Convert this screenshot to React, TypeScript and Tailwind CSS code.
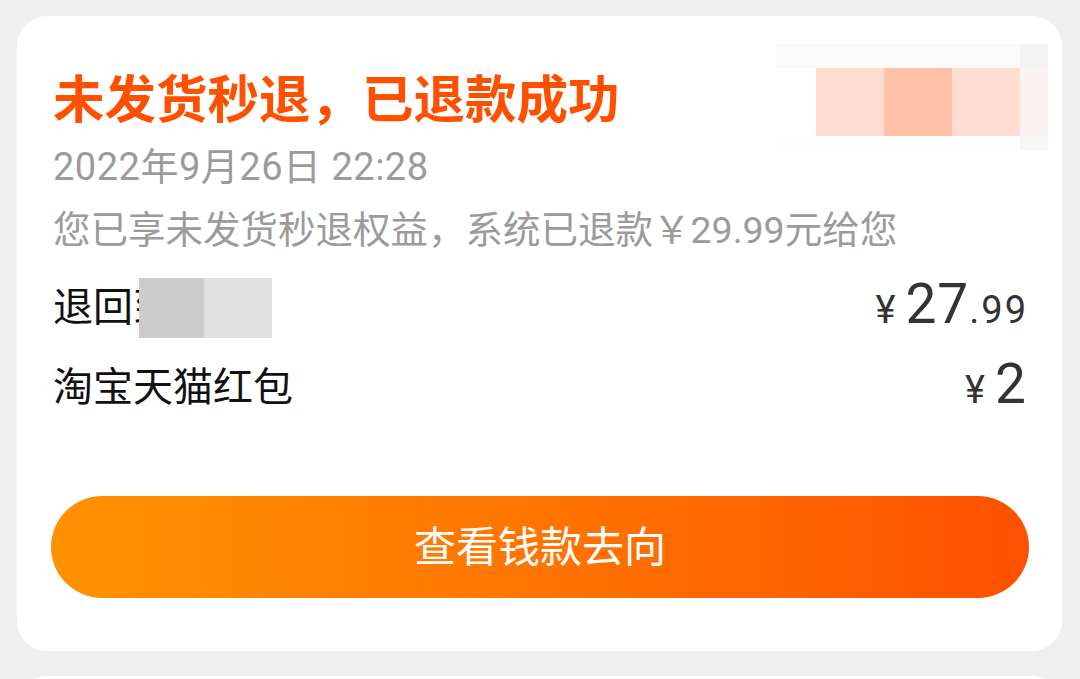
import React from "react"

const font = { fontFamily: 'Roboto, "Noto Sans CJK SC", sans-serif' }

function Mosaic() {
  return (
    <div className="absolute left-[759px] top-[28px] flex flex-col w-[272px]">
      <div className="flex h-[24px]">
        <div className="w-[244px] bg-[#fafafa]" />
        <div className="w-[28px] bg-[#f3f3f3]" />
      </div>
      <div className="flex h-[68px]">
        <div className="w-[40px] bg-white" />
        <div className="w-[68px] bg-[#ffdcd0]" />
        <div className="w-[68px] bg-[#ffc2a8]" />
        <div className="w-[68px] bg-[#ffddd2]" />
        <div className="w-[28px] bg-[#faf3f1]" />
      </div>
      <div className="flex h-[14px]">
        <div className="w-[244px] bg-[#fefefe]" />
        <div className="w-[28px] bg-[#f6f6f6]" />
      </div>
    </div>
  )
}

export default function App() {
  return (
    <div className="h-[679px] bg-[#efefef] pt-[16px] pl-[17px] pr-[18px] overflow-hidden" style={font}>
      {/* Refund card */}
      <div className="relative bg-white rounded-[30px] px-[36px] pt-[55px] pb-[53px]">
        <Mosaic />
        <h1 className="h-[60px] leading-[60px] text-[51.5px] font-bold text-[#ff5000] whitespace-nowrap">
          未发货秒退，已退款成功
        </h1>
        <p className="mt-[14px] h-[44px] leading-[44px] text-[38px] tracking-[0.5px] text-[#9b9b9b] whitespace-nowrap">
          2022年9月26日 22:28
        </p>
        <p className="mt-[19px] h-[44px] leading-[44px] text-[37.5px] text-[#9b9b9b] whitespace-nowrap">
          您已享未发货秒退权益，系统已退款￥29.99元给您
        </p>

        <div className="mt-[26px] h-[60px] flex items-center justify-between">
          <div className="relative h-[60px] flex items-center text-[40px] text-[#111111]">
            <span>退回到</span>
            <div className="absolute left-[86px] top-0 h-[60px] flex">
              <div className="w-[65px] bg-[#cccccc]" />
              <div className="w-[68px] bg-[#e0e0e0]" />
            </div>
          </div>
          <div className="flex items-baseline text-[#333333]">
            <span className="text-[38px] mr-[10px]">¥</span>
            <span className="text-[55px] leading-none tracking-[1px]">27</span>
            <span className="text-[38px] tracking-[2px] -mr-[2px]">.99</span>
          </div>
        </div>

        <div className="mt-[20px] h-[60px] flex items-center justify-between">
          <span className="text-[40px] text-[#111111]">淘宝天猫红包</span>
          <div className="flex items-baseline text-[#333333]">
            <span className="text-[38px] mr-[10px]">¥</span>
            <span className="text-[55px] leading-none">2</span>
          </div>
        </div>

        <button className="mt-[78px] -ml-[2px] w-[978px] h-[102px] rounded-full bg-linear-to-r from-[#ff9200] to-[#ff5000] text-white text-[42px] flex items-center justify-center">
          查看钱款去向
        </button>
      </div>

      {/* Next card */}
      <div className="mt-[25px] h-[60px] bg-white rounded-t-[30px]" />
    </div>
  )
}
